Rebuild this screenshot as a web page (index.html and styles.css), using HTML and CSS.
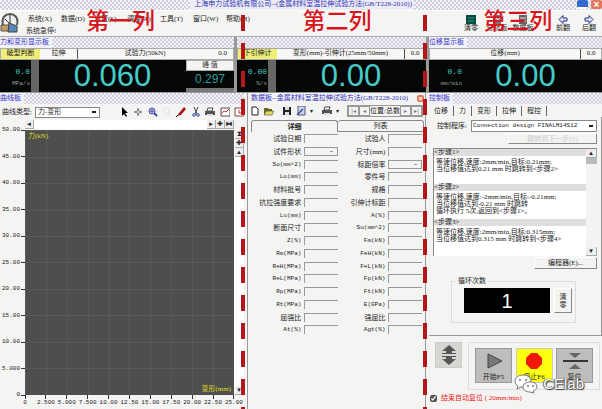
FILE: index.html
```
<!doctype html>
<html lang="zh-CN">
  <head>
    <meta charset="utf-8">
    <title>金属材料室温拉伸试验方法</title>
    <link rel="stylesheet" href="styles.css">
  </head>
  <body>
    <header class="titlebar hatch">
      <span class="apptitle">上海申力试验机有限公司--(金属材料室温拉伸试验方法(GB/T228-2010))</span>
      <button class="winbtn min" aria-label="最小化"></button>
      <button class="winbtn close" aria-label="关闭">×</button>
    </header>

    <div class="menubar">
      <svg class="logo" viewBox="0 0 20 22">
        <path d="M3 13C1 5 6 2 10 2s9 3 7 11" fill="#eee" stroke="#555" stroke-width="2"/>
        <path d="M10 3v9M5 7l4 4" stroke="#333"/>
        <path d="M1 13h8v6H1z" fill="#c99b62" stroke="#555"/>
        <path d="M9 11l8 3v6h-9z" fill="#5988b5" stroke="#444"/>
      </svg>
      <div class="menus">
        <nav class="menu">
          <a href="#">系统(X)</a><a href="#">数据(D)</a><a href="#">设置(S)</a><a href="#">调整(A)</a><a href="#">工具(T)</a><a href="#">窗口(W)</a><a href="#">帮助(H)</a>
        </nav>
        <div class="status">系统急停!</div>
      </div>
      <div class="tools">
        <button><svg viewBox="0 0 10 9"><path d="M0 0h10v9H0z" fill="#064b42"/><path d="M2 3h6M2 6h6" stroke="#2c9c86"/></svg>清零</button>
        <button><svg viewBox="0 0 10 9"><path d="M1 0h8v9H1z" fill="#777"/><path d="M2 6l2-3 2 2 2-3" stroke="#fff" fill="none"/></svg>分析板</button>
        <button><svg viewBox="0 0 10 9"><path d="M1 0h8v9H1z" fill="#666"/><path d="M2 3h6M2 6h6" stroke="#ddd"/></svg>数据板</button>
        <button class="prev"><svg viewBox="0 0 10 9"><path d="M1 4.500l4-4v2.500h4v3H5v2.500z" fill="#dfe5ff" stroke="#25357c"/></svg>前翻</button>
        <button><svg viewBox="0 0 10 9"><path d="M9 4.500l-4-4v2.500H1v3h4v2.500z" fill="#dfe5ff" stroke="#25357c"/></svg>后翻</button>
      </div>
    </div>

    <section class="displays">
      <div class="display">
        <h2 class="caption hatch"><span>力和变形显示板</span></h2>
        <div class="cells"><span class="yellow">破型判断</span><span class="mode">拉伸</span><span class="name">试验力(50kN)</span><span class="rate">0.0</span></div>
        <div class="lcd">
          <div class="speed"><b>0.0</b><i>MPa/s</i></div>
          <div class="big">0.060</div>
          <div class="peak"><span>峰 值</span><b>0.297</b></div>
        </div>
      </div>
      <div class="display">
        <h2 class="caption hatch"></h2>
        <div class="cells"><span class="yellow">下引伸计</span><span class="name">变形(mm)-引伸计(25mm/50mm)</span><span class="rate boxed">0.0</span></div>
        <div class="lcd">
          <div class="speed"><b>0.00</b><i>%/s</i></div>
          <div class="big">0.00</div>
        </div>
      </div>
      <div class="display last">
        <h2 class="caption hatch"><span>位移显示板</span></h2>
        <div class="cells"><span class="name">位移(mm)</span><span class="rate boxed">0.0</span></div>
        <div class="lcd">
          <div class="speed"><b>0.0</b><i>mm/min</i></div>
          <div class="big">0.00</div>
        </div>
      </div>
    </section>

    <main class="panels">
      <section class="curve">
        <h2 class="caption hatch"><span>曲线板</span></h2>
        <div class="curvebar">
          <label for="ctype">曲线类型:</label>
          <select id="ctype"><option>力-变形</option></select>
          <div class="icons">
            <svg viewBox="0 0 10 10"><path d="M3 0v9l2-2 2 3 1-1-2-3h3z"/></svg>
            <svg viewBox="0 0 10 10"><path d="M5 1v8M1 5h8" stroke="#444"/><circle cx="5" cy="5" r="1.500" fill="#fff" stroke="#444" stroke-width=".6"/></svg>
            <svg viewBox="0 0 10 10"><circle cx="4" cy="4" r="3" fill="#dde" stroke="#4343a8"/><path d="M2 4h4M4 2v4" stroke="#4343a8"/><path d="M6 6l3 3" stroke="#4343a8" stroke-width="2"/></svg>
            <svg viewBox="0 0 10 10"><circle cx="4" cy="4" r="3" fill="none" stroke="#e3e3e3"/><path d="M6 6l3 3" stroke="#e3e3e3"/></svg>
            <svg viewBox="0 0 10 10"><path d="M1 9l2-3 5-6 2 2-5 6z" fill="#b01818"/><path d="M0 10l2-2" stroke="#000"/></svg>
            <svg viewBox="0 0 10 10"><path d="M3 0l3 7M7 0L4 7" stroke="#444" fill="none"/><circle cx="3" cy="8" r="1.300" fill="none" stroke="#3450b0"/><circle cx="7" cy="8" r="1.300" fill="none" stroke="#3450b0"/></svg>
            <svg viewBox="0 0 10 10"><path d="M3 1h5l-1 3H2z" fill="#fff" stroke="#444"/><path d="M0 4h10v4H0z" fill="#555"/><path d="M2 7h6v2H2z" fill="#ddd"/></svg>
            <svg viewBox="0 0 10 10"><path d="M1 1h9v8H1z" fill="#fff" stroke="#555"/><path d="M1 7l3-3 2 1 3-3" stroke="#c33" fill="none"/></svg>
            <svg viewBox="0 0 10 10"><path d="M1 1h9v8H1z" fill="#fff" stroke="#844"/><path d="M5 3v3h3" stroke="#c33" fill="none"/></svg>
          </div>
        </div>
        <div class="plot">
          <div class="hscroll"><button>◂</button><span></span><button>▸</button><button>✚</button><button>⧓</button></div>
          <div class="yaxis">
            <span>50.00</span><span>45.00</span><span>40.00</span><span>35.00</span><span>30.00</span><span>25.00</span><span>20.00</span><span>15.00</span><span>10.00</span><span>5.000</span><span>0</span>
          </div>
          <div class="chart"><span>力(kN)</span><span class="xname">变形(mm)</span></div>
          <div class="vscroll"><button>⧗</button><button>✚</button><button>▴</button><span></span><button>▾</button></div>
          <div class="xaxis">
            <span>0</span><span>2.500</span><span>5.000</span><span>7.500</span><span>10.00</span><span>12.50</span><span>15.00</span><span>17.50</span><span>20.00</span><span>22.50</span><span>25.00</span>
          </div>
        </div>
      </section>

      <section class="data">
        <h2 class="datatitle"><span>数据板--金属材料室温拉伸试验方法(GB/T228-2010)</span><button class="winbtn close" aria-label="关闭">×</button></h2>
        <div class="databar">
          <svg viewBox="0 0 10 10"><path d="M2 1h4l2 2v6H2z" fill="#fff" stroke="#222"/></svg>
          <svg viewBox="0 0 10 10"><path d="M0 2h4l1 1h3v5H0z" fill="#6a6a20"/><path d="M2 5h8L8 9H0z" fill="#e0dc60" stroke="#444" stroke-width=".6"/></svg>
          <svg class="gap" viewBox="0 0 10 10"><path d="M1 1h8v8H1z" fill="#222"/><path d="M3 1h4v3H3zM3 6h4v3H3z" fill="#ddd"/></svg>
          <svg viewBox="0 0 10 10"><path d="M2 0h7v9H2z" fill="#ccd5ee" stroke="#557"/><path d="M1 9l6-6" stroke="#334a9a" stroke-width="1.500"/></svg>
          <i>▾</i>
          <svg class="gap" viewBox="0 0 10 10"><path d="M3 1h5l-1 3H2z" fill="#fff" stroke="#444"/><path d="M0 4h10v4H0z" fill="#555"/><path d="M2 7h6v2H2z" fill="#ddd"/></svg>
          <i>▾</i>
          <div class="nav"><button>|◂</button><button>◂</button><span>位置/总数</span><button>▸</button><button>▸|</button></div>
        </div>
        <div class="tabs"><button class="on">详细</button><button>列表</button></div>
        <form class="fields">
          <label for="f1">试验日期</label><input id="f1"><label for="g1">试验人</label><input id="g1">
          <label for="f2">试件形状</label><select id="f2"><option></option></select><label for="g2">尺寸(mm)</label><input id="g2">
          <label class="en" for="f3">So(mm^2)</label><input id="f3"><label for="g3">标距倍率</label><select id="g3"><option></option></select>
          <label class="en" for="f4">Lo(mm)</label><input id="f4"><label for="g4">零件号</label><input id="g4">
          <label for="f5">材料批号</label><input id="f5"><label for="g5">规格</label><input id="g5">
          <label for="f6">抗拉强度要求</label><input id="f6"><label for="g6">引伸计标距</label><input id="g6">
          <label class="en" for="f7">Lu(mm)</label><input id="f7"><label class="en" for="g7">A(%)</label><input id="g7">
          <label for="f8">断面尺寸</label><input id="f8"><label class="en" for="g8">Su(mm^2)</label><input id="g8">
          <label class="en" for="f9">Z(%)</label><input id="f9"><label class="en" for="g9">Fm(kN)</label><input id="g9">
          <label class="en" for="f10">Rm(MPa)</label><input id="f10"><label class="en" for="g10">FeH(kN)</label><input id="g10">
          <label class="en" for="f11">ReH(MPa)</label><input id="f11"><label class="en" for="g11">FeL(kN)</label><input id="g11">
          <label class="en" for="f12">ReL(MPa)</label><input id="f12"><label class="en" for="g12">Fp(kN)</label><input id="g12">
          <label class="en" for="f13">Rp(MPa)</label><input id="f13"><label class="en" for="g13">Ft(kN)</label><input id="g13">
          <label class="en" for="f14">Rt(MPa)</label><input id="f14"><label class="en" for="g14">E(GPa)</label><input id="g14">
          <label for="f15">屈强比</label><input id="f15"><label for="g15">强屈比</label><input id="g15">
          <label class="en" for="f16">At(%)</label><input id="f16"><label class="en" for="g16">Agt(%)</label><input id="g16">
        </form>
      </section>

      <section class="control">
        <h2 class="caption hatch"><span>控制板</span></h2>
        <div class="ctabs"><button>位移</button><button>力</button><button>变形</button><button>拉伸</button><button>程控</button></div>
        <div class="program">
          <div class="progline">
            <label for="prog">控制程序:</label>
            <select class="en" id="prog"><option>Connection design FINALM14S12</option></select>
          </div>
          <button class="raised jump" disabled>跳转到下一步(S)</button>
          <div class="steps">
            <div class="steplist">
              <h3>&lt;步骤1&gt;</h3>
              <p>等速位移,速度:2mm/min,目标:0.21mm;<br>当位移值达到0.21 mm 时跳转到&lt;步骤2&gt;</p>
              <h3>&lt;步骤2&gt;</h3>
              <p>等速位移,速度:-2mm/min,目标:-0.21mm;<br>当位移值达到-0.21 mm 时跳转<br>循环执行 5次,返回到&lt;步骤1&gt;。</p>
              <h3>&lt;步骤3&gt;</h3>
              <p>等速位移,速度:2mm/min,目标:0.315mm;<br>当位移值达到0.315 mm 时跳转到&lt;步骤4&gt;</p>
            </div>
            <div class="stepscroll"><button>▴</button><b></b><span></span><button>▾</button></div>
          </div>
          <button class="raised edit">编程器(E)...</button>
          <fieldset class="loop">
            <legend>循环次数</legend>
            <output>1</output>
            <button class="raised">清零</button>
          </fieldset>
        </div>
        <div class="actions">
          <button class="jog" aria-label="移动"><svg viewBox="0 0 16 20"><path d="M8 0l7 6h-4v2h4v1H1V8h4V6H1zM8 20l7-6h-4v-2h4v-1H1v1h4v2H1z" fill="#555"/></svg></button>
          <div class="run">
            <button><svg viewBox="0 0 30 18"><path d="M9 3l14 7-14 7z" fill="#777" stroke="#444"/></svg>开始F5</button>
            <button class="stop"><svg viewBox="0 0 30 18"><path d="M12 2h6l5 5v6l-5 5h-6l-5-5V7z" fill="#f01808"/></svg>停止F6</button>
            <button><svg viewBox="0 0 30 18"><path d="M9 2h12l-6 5zM9 18h12l-6-5z" fill="#666"/><path d="M3 10h25" stroke="#333" stroke-width="2"/></svg>复位</button>
          </div>
        </div>
        <label class="auto"><input type="checkbox" checked>结束自动复位 ( 20mm/min)</label>
      </section>
    </main>

    <div class="divider first"></div>
    <div class="divider second"></div>
    <strong class="mark m1">第一列</strong>
    <strong class="mark m2">第二列</strong>
    <strong class="mark m3">第三列</strong>
    <div class="watermark">
      <svg viewBox="0 0 24 20">
        <path d="M9 1C4 1 1 4 1 7c0 2 1 4 3 5l-1 3 4-2c6 1 10-2 10-6 0-3-3-6-8-6z" fill="#fff" stroke="#777"/>
        <path d="M16 8c-4 0-7 2-7 5s3 5 7 5l4 1-1-2c2-1 4-2 4-4 0-3-3-5-7-5z" fill="#fff" stroke="#777"/>
        <circle cx="6" cy="6" r="1"/><circle cx="12" cy="6" r="1"/><circle cx="14" cy="12" r="1"/><circle cx="19" cy="12" r="1"/>
      </svg>
      <span>CElab</span>
    </div>
  </body>
</html>
```
FILE: styles.css
```
* {
  box-sizing: border-box;
}
body {
  position: relative;
  display: flex;
  flex-direction: column;
  min-height: 100vh;
  margin: 0;
  overflow: hidden;
  background: #f4f4f3;
  color: #222;
  font: 7px/8px "Liberation Serif", "Noto Sans CJK SC", serif;
  white-space: nowrap;
}
button, select, input {
  min-width: 0;
  margin: 0;
  padding: 0;
  border: 0;
  border-radius: 0;
  background: none;
  color: inherit;
  font: inherit;
}
select {
  appearance: none;
}
a {
  color: inherit;
  text-decoration: none;
}
h2, h3, p {
  margin: 0;
  font: inherit;
}
.en {
  font: 6px/8px "Liberation Mono", monospace;
}
.hatch {
  background: repeating-conic-gradient(#cfcfe0 0 25%, #f3f3f8 0 50%) 0 0 / 4px 4px;
}

/* title and menu */
.titlebar {
  display: flex;
  height: 10px;
  color: #3434b8;
}
.apptitle {
  margin: 0 160px 0 auto;
  padding: 0 2px 0 4px;
  background: #ececf5;
}
.winbtn {
  width: 11px;
  height: 9px;
  margin-left: 3px;
  border-radius: 2px;
  background: #e2785c;
  color: #fff;
  font: bold 10px/8px "Liberation Sans", sans-serif;
}
.min {
  border-bottom: 2px solid #fff;
  background: #356bd0;
}
.menubar {
  display: flex;
  height: 27px;
  border-top: 1px solid #fff;
  border-bottom: 1px solid #aaa;
}
.logo {
  width: 20px;
  height: 22px;
  margin-top: 1px;
}
.menus {
  flex: 1;
  padding: 4px 0 0 6px;
}
.menu {
  display: flex;
  height: 11px;
  padding-left: 2px;
}
.menu a {
  width: 33px;
}
.status {
  line-height: 10px;
}
.tools {
  display: flex;
  padding-top: 4px;
}
.tools button {
  display: flex;
  flex-direction: column;
  align-items: center;
  width: 26px;
}
.tools svg {
  width: 10px;
  height: 9px;
}
.tools .prev {
  margin-left: 14px;
}

/* readouts */
.displays {
  display: grid;
  grid-template-columns: 237fr 192fr 173fr;
  height: 56px;
}
.display {
  padding-right: 3px;
  background: #999;
}
.display.last {
  padding-right: 0;
}
.caption {
  height: 11px;
  overflow: hidden;
  color: #3434c8;
  line-height: 11px;
}
.caption span {
  display: inline-block;
  padding-right: 3px;
  background: #f1f1f7;
}
.cells {
  display: flex;
  height: 12px;
  border: 1px solid #aaa;
  background: #f7f7f5;
  line-height: 9px;
  text-align: center;
}
.cells .yellow {
  width: 39px;
  background: #eeee78;
}
.mode {
  width: 38px;
  border-right: 1px solid #555;
}
.name {
  flex: 1;
}
.rate {
  width: 21px;
}
.boxed {
  border-left: 1px solid #555;
}
.lcd {
  display: flex;
  height: 32px;
  background: #050707;
  color: #45cbc8;
}
.speed {
  width: 39px;
  padding: 6px 1px 0 0;
  border-right: 8px solid #666;
  font: 8px/12px "Liberation Mono", monospace;
  text-align: right;
}
.speed b {
  display: block;
  font-weight: normal;
}
.speed i {
  display: block;
  color: #999;
  font-size: 6px;
  font-style: normal;
}
.last .speed {
  width: 34px;
  border-right: 0;
}
.big {
  flex: 1;
  font: 31px/32px "Liberation Sans", sans-serif;
  text-align: center;
}
.last .big {
  padding-right: 14px;
}
.peak {
  width: 48px;
  border-bottom: 4px solid #777;
}
.peak span {
  display: block;
  height: 11px;
  border: 1px solid #aaa;
  background: #f4f4f2;
  color: #333;
  text-align: center;
}
.peak b {
  display: block;
  color: #329997;
  font: 12px/17px "Liberation Sans", sans-serif;
  text-align: center;
}

/* lower panels */
.panels {
  display: grid;
  flex: 1;
  grid-template-columns: 244fr 179fr 173fr;
  column-gap: 3px;
}
.curve {
  display: flex;
  flex-direction: column;
}
.curvebar {
  display: flex;
  align-items: center;
  height: 16px;
  padding-left: 2px;
}
.curvebar select {
  width: 65px;
  height: 11px;
  margin-left: 3px;
  padding-left: 2px;
  border: 1px solid #888;
}
.curvebar select, .progline select {
  background: linear-gradient(#222, #222) right 3px center / 4px 2px no-repeat #fff;
}
.icons {
  display: flex;
  flex: 1;
  justify-content: space-between;
  padding-left: 19px;
}
.icons svg, .databar svg {
  width: 10px;
  height: 10px;
}
.plot {
  display: grid;
  flex: 1;
  grid-template: 10px 1fr 14px / 25px 1fr 10px;
}
.hscroll {
  display: flex;
  grid-area: 1 / 2;
  height: 9px;
  background: #fff;
}
.hscroll span, .vscroll span {
  flex: 1;
}
.hscroll button, .vscroll button, .stepscroll button {
  width: 9px;
  height: 9px;
  border: 1px solid #aaa;
  border-width: 0 1px 1px 0;
  background: #eee;
  font: 7px/8px "DejaVu Sans", sans-serif;
}
.yaxis {
  display: flex;
  flex-direction: column;
  grid-area: 2 / 1;
  justify-content: space-between;
  font: 6px/8px "Liberation Mono", monospace;
}
.yaxis span {
  display: flex;
  align-items: center;
  justify-content: flex-end;
  height: 0;
}
.yaxis span::after {
  width: 4px;
  height: 1px;
  margin-left: 1px;
  background: #333;
  content: "";
}
.chart {
  display: flex;
  flex-direction: column;
  grid-area: 2 / 2;
  justify-content: space-between;
  padding: 2px 3px;
  background:
    repeating-linear-gradient(to right, #595959 0 1px, transparent 1px 10%),
    repeating-linear-gradient(to bottom, #595959 0 1px, transparent 1px 10%),
    #4e4e4e;
  color: #dede28;
}
.xname {
  align-self: flex-end;
}
.vscroll {
  display: flex;
  flex-direction: column;
  grid-area: 2 / 3;
  padding-left: 1px;
  background: #fff;
}
.xaxis {
  display: flex;
  grid-area: 3 / 2;
  justify-content: space-between;
  font: 6px/8px "Liberation Mono", monospace;
}
.xaxis span {
  display: flex;
  flex-direction: column;
  align-items: center;
  width: 0;
}
.xaxis span::before {
  width: 1px;
  height: 4px;
  background: #333;
  content: "";
}

.data {
  border: 1px solid #999;
  border-width: 0 1px;
}
.datatitle {
  display: flex;
  justify-content: space-between;
  height: 11px;
  padding-left: 3px;
  color: #3030c0;
  line-height: 11px;
}
.datatitle .winbtn {
  width: 7px;
  height: 7px;
  margin: 2px 1px;
  font-size: 7px;
  line-height: 7px;
}
.databar {
  display: flex;
  align-items: center;
  height: 14px;
  padding: 0 2px;
  gap: 4px;
}
.databar .gap {
  margin-left: 4px;
}
.databar i {
  width: 4px;
  font: 6px/8px "DejaVu Sans", sans-serif;
}
.nav {
  display: flex;
  align-items: center;
  height: 12px;
  margin-left: auto;
  border: 1px solid #999;
}
.nav button {
  width: 11px;
  height: 10px;
  border: 1px solid #999;
  color: #777;
  font: 6px/8px "DejaVu Sans", sans-serif;
}
.nav span {
  width: 30px;
  overflow: hidden;
}
.tabs {
  display: flex;
  margin: 2px 1px 2px 3px;
}
.tabs button {
  flex: 1;
  height: 12px;
  border: 1px solid #888;
  border-left: 0;
  border-radius: 3px 3px 0 0;
}
.tabs .on {
  border-bottom: 0;
  border-left: 1px solid #888;
  font-weight: bold;
}
.fields {
  display: grid;
  grid-template-columns: 54fr 34fr 45fr 34fr;
  grid-auto-rows: 1fr;
  height: 204px;
  padding-right: 3px;
  column-gap: 3px;
}
.fields label {
  text-align: right;
  line-height: 10px;
}
.fields input, .fields select {
  width: 100%;
  height: 9px;
  border: 1px solid #999;
  border-width: 1px 0 0 1px;
}
.fields select {
  border-width: 1px;
  background: linear-gradient(#999, #999) right 4px center / 3px 1px no-repeat;
}

.control {
  min-width: 0;
}
.ctabs {
  display: flex;
  height: 13px;
  padding-top: 2px;
}
.ctabs button {
  height: 10px;
  padding: 0 5px;
  border-right: 1px solid #666;
}
.program {
  height: 219px;
  padding: 3px 4px 0;
  border: 1px solid #999;
  border-width: 0 1px 1px 0;
}
.progline {
  display: flex;
  align-items: center;
  padding-left: 4px;
}
.progline select {
  flex: 1;
  height: 12px;
  margin-left: 4px;
  padding-left: 1px;
  border: 1px solid #888;
}
.raised {
  border: 1px solid #888;
  border-color: #fff #888 #888 #fff;
  background: #f3f3f1;
}
.jump {
  display: block;
  width: 89px;
  height: 11px;
  margin: 1px 0 4px auto;
  color: #ccc;
}
.steps {
  display: flex;
  height: 108px;
  border: 1px solid #888;
  border-width: 1px 0 0 1px;
  background: #fff;
}
.steplist {
  flex: 1;
  min-width: 0;
  overflow: hidden;
  line-height: 7px;
}
.steplist h3 {
  height: 7px;
  background: #dedede;
}
.steplist p {
  height: 28px;
  padding: 3px 0 0 2px;
}
.stepscroll {
  display: flex;
  flex-direction: column;
  width: 11px;
  background: #f3f3f3;
}
.stepscroll button {
  width: 11px;
}
.stepscroll b {
  height: 6px;
  background: #bbb;
}
.stepscroll span {
  flex: 1;
}
.edit {
  display: block;
  width: 63px;
  height: 12px;
  margin: 1px 0 8px auto;
}
.loop {
  display: flex;
  width: 125px;
  height: 46px;
  margin: 0 0 0 18px;
  padding: 3px 3px 9px 12px;
  gap: 4px;
  border: 1px solid #ddd;
}
.loop legend {
  margin-left: -8px;
  padding: 0 2px;
}
.loop output {
  flex: 1;
  background: #000;
  color: #fff;
  font: 20px/27px "Liberation Sans", sans-serif;
  text-align: center;
}
.loop button {
  width: 18px;
  padding: 0 4px;
  white-space: normal;
}
.actions {
  display: flex;
  align-items: flex-start;
  padding: 6px 2px 4px 6px;
  gap: 6px;
}
.jog {
  width: 27px;
  height: 26px;
  border: 1px solid #ccc;
  background: #d6d6d2;
}
.jog svg {
  width: 16px;
  height: 20px;
  margin-top: 2px;
}
.run {
  display: flex;
  flex: 1;
  justify-content: space-between;
  padding: 5px 6px 6px;
  border: 1px solid #ddd;
}
.run button {
  width: 37px;
  height: 35px;
  border: 1px solid #999;
  background: #bdbdbb;
}
.run .stop {
  border-color: #ccc;
  background: #ffff10;
}
.run svg {
  display: block;
  width: 30px;
  height: 18px;
  margin: 1px auto 4px;
}
.auto {
  display: flex;
  align-items: center;
  color: #f02020;
  gap: 4px;
}
.auto input {
  width: 7px;
  height: 7px;
  margin-left: 1px;
  accent-color: #555;
}

/* column annotations lie over the window */
.divider {
  position: absolute;
  top: 15px;
  bottom: 0;
  width: 4px;
  background: repeating-linear-gradient(#b5161c 0 16px, transparent 16px 28px);
}
.first {
  left: 40%;
}
.second {
  right: 29%;
}
.mark {
  position: absolute;
  top: 6px;
  color: #d8141c;
  font: 500 23px/26px "Noto Sans CJK SC", sans-serif;
  transform: translateX(-50%);
}
.m1 {
  left: 20%;
}
.m2 {
  left: 56%;
}
.m3 {
  left: 86%;
}
.watermark {
  position: absolute;
  right: 18px;
  bottom: 15px;
  display: flex;
  align-items: center;
  gap: 5px;
  color: #fff;
  font: 15px/20px "Liberation Sans", sans-serif;
  text-shadow: 0 0 1px #333, 1px 1px 1px #333, -1px 0 1px #777;
}
.watermark svg {
  width: 24px;
  height: 20px;
}
.watermark circle {
  fill: #777;
}
```
